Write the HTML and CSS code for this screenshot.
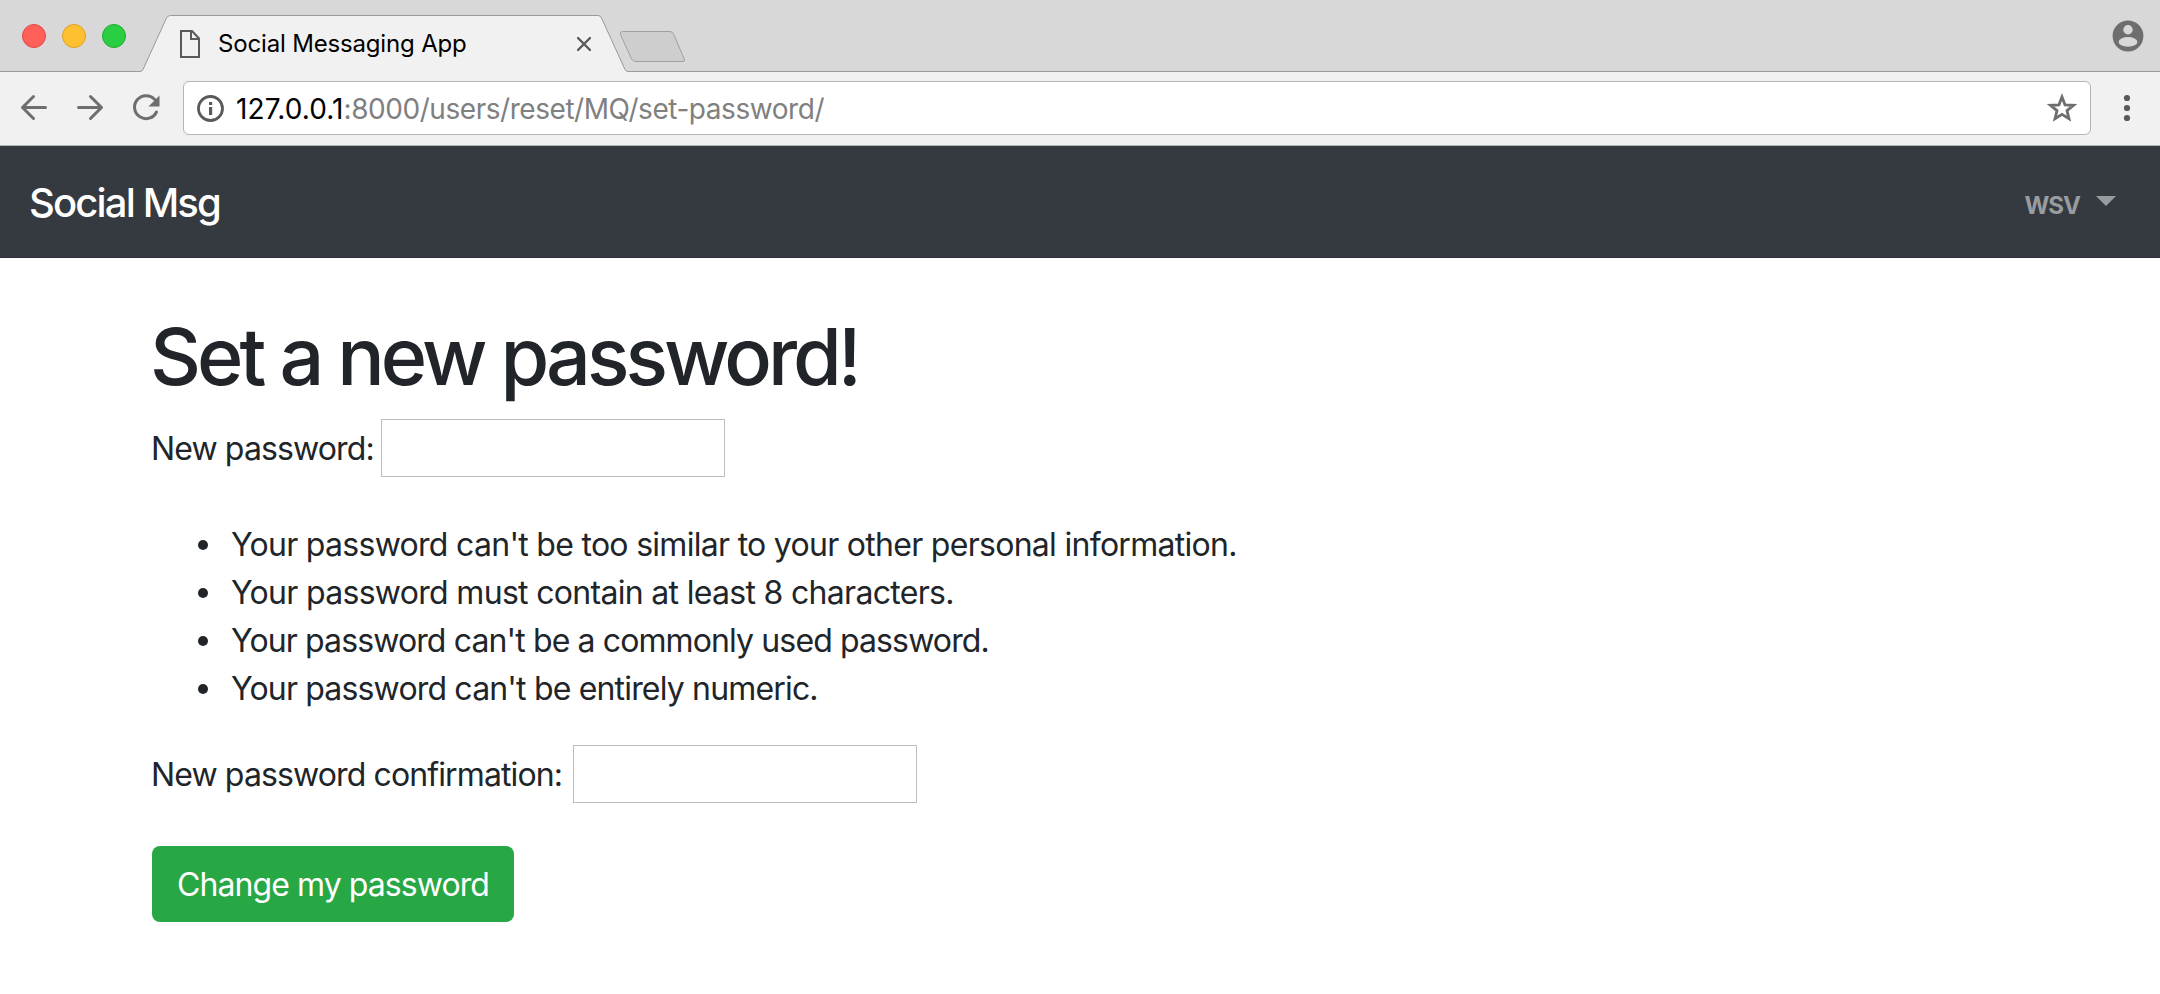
FILE: index.html
```html
<!DOCTYPE html>
<html lang="en">
<head>
<meta charset="utf-8">
<title>Social Messaging App</title>
<link rel="stylesheet" href="styles.css">
</head>
<body>
<header class="browser">
  <div class="tabstrip">
    <svg class="tab-shapes" width="2160" height="73" viewBox="0 0 2160 73">
      <path class="tab-fill" d="M0 71.5H140Q142 71.5 143 69.5L166.500 18Q168 15.500 170.500 15.500H598Q600.500 15.500 601.500 18L625 69.500Q626 71.500 628 71.500H2160V73H0Z"/>
      <path class="tab-line" d="M0 71.500H140Q142 71.500 143 69.500L166.500 18Q168 15.500 170.500 15.500H598Q600.500 15.500 601.500 18L625 69.500Q626 71.500 628 71.500H2160"/>
      <path class="new-tab" d="M622.500 31.500H670Q672.500 31.500 673.500 34L684 58.500Q685.500 61.500 683 61.500H636Q633 61.500 631.500 59L620.500 34.500Q619.500 31.500 622.500 31.500Z"/>
    </svg>
    <div class="lights"><i class="light red"></i><i class="light yellow"></i><i class="light green"></i></div>
    <div class="tab">
      <svg width="20" height="28" viewBox="0 0 20 28"><path d="M1 1H12L19 8.500V27H1Z M11 1V9H19" fill="none" stroke="#5a5a5a" stroke-width="2"/></svg>
      <span class="tab-title">Social Messaging App</span>
      <svg class="close" width="14" height="14" viewBox="0 0 14 14"><path d="M1 1L13 13M13 1L1 13" stroke="#5a5a5a" stroke-width="2.400" stroke-linecap="round"/></svg>
    </div>
    <svg class="profile" width="32" height="32" viewBox="0 0 32 32"><circle cx="16" cy="16" r="15.400" fill="#6e6e6e"/><circle cx="16" cy="9.700" r="4.700" fill="#d8d8d8"/><ellipse cx="16" cy="21.900" rx="9.400" ry="4.900" fill="#d8d8d8"/></svg>
  </div>
  <div class="toolbar">
    <svg class="nav-icons" width="162" height="32" viewBox="0 0 162 32">
      <g fill="none" stroke="#6e6e6e" stroke-width="3" stroke-linecap="round" stroke-linejoin="round">
        <path d="M25.500 16.500H2.500M13.500 5.500L2.500 16.500L13.500 27.500"/>
        <path d="M58.500 16.500H81.500M70.500 5.500L81.500 16.500L70.500 27.500"/>
        <path d="M134.500 8.300A11.500 11.500 0 1 0 136.500 21"/>
      </g>
      <path d="M139.500 4.500V15.500H128.500Z" fill="#6e6e6e"/>
    </svg>
    <div class="address">
      <svg width="28" height="28" viewBox="0 0 28 28"><circle cx="13.500" cy="14.500" r="12" fill="none" stroke="#5a5a5a" stroke-width="2.800"/><path d="M12 8h3.200v3h-3.200zM12 13h3.200v8h-3.200z" fill="#5a5a5a"/></svg>
      <span class="url"><b>127.0.0.1</b>:8000/users/reset/MQ/set-password/</span>
      <svg class="star" width="30" height="30" viewBox="0 0 30 30"><path d="M15 4L18 11.800L26.400 12.300L20 17.600L22 25.800L15 21.300L8 25.800L10 17.600L3.600 12.300L12 11.800Z" fill="none" stroke="#6e6e6e" stroke-width="2.800"/></svg>
    </div>
    <svg class="menu" width="8" height="28" viewBox="0 0 8 28" fill="#5a5a5a"><circle cx="4" cy="4" r="3.100"/><circle cx="4" cy="14" r="3.100"/><circle cx="4" cy="24" r="3.100"/></svg>
  </div>
</header>
<nav class="navbar">
  <a class="brand">Social Msg</a>
  <a class="user"><span>WSV</span><i class="caret"></i></a>
</nav>
<main class="content">
  <h1 class="heading">Set a new password!</h1>
  <form>
    <div class="field"><label class="label first" for="p1">New password:</label><input class="input" id="p1" type="password"></div>
    <ul class="rules">
      <li><span class="rule r1">Your password can't be too similar to your other personal information.</span></li>
      <li><span class="rule r2">Your password must contain at least 8 characters.</span></li>
      <li><span class="rule r3">Your password can't be a commonly used password.</span></li>
      <li><span class="rule r4">Your password can't be entirely numeric.</span></li>
    </ul>
    <div class="field"><label class="label second" for="p2">New password confirmation:</label><input class="input" id="p2" type="password"></div>
    <button class="submit" type="button">Change my password</button>
  </form>
</main>
</body>
</html>
```
FILE: styles.css
```css
* { box-sizing: border-box; }
body {
  margin: 0;
  background: #fff;
  color: #212529;
  font-family: Inter, "Liberation Sans", sans-serif;
  font-size: 32px;
  line-height: 48px;
  letter-spacing: -0.88px;
  white-space: nowrap;
  overflow: hidden;
}
svg { display: block; flex: none; }

.tabstrip { position: relative; height: 72px; display: flex; background: #d8d8d8; }
.tab-shapes { position: absolute; left: 0; top: 0; }
.tab-fill { fill: #f1f1f1; }
.tab-line { fill: none; stroke: #999; }
.new-tab { fill: #cecece; stroke: #a0a0a0; }
.lights { position: relative; display: flex; gap: 16px; padding: 24px 0 0 22px; width: 180px; }
.light { width: 24px; height: 24px; border-radius: 50%; border: 1px solid; }
.red { background: #ff6059; border-color: #e14942; }
.yellow { background: #ffc02f; border-color: #dfa023; }
.green { background: #29ce42; border-color: #1dad2b; }
.tab { position: relative; display: flex; align-items: center; width: 411px; height: 28px; margin-top: 30px; }
.tab-title { margin-left: 18px; color: #000; font-size: 24px; line-height: 28px; letter-spacing: -0.17px; }
.close { margin-left: auto; }
.profile { position: relative; margin: 20px 16px 0 auto; }

.toolbar { display: flex; height: 74px; background: #f1f1f1; border-bottom: 1px solid #aeb2b2; }
.nav-icons { margin: 19px 0 0 20px; }
.address { display: flex; align-items: center; width: 1908px; height: 54px; margin: 9px 0 0 1px; padding: 0 13px; border: 1px solid #b4b4b4; border-radius: 6px; background: #fff; }
.url { margin-left: 11px; padding-top: 3px; color: #808080; font-size: 28px; line-height: 49px; letter-spacing: -0.45px; }
.url b { color: #000; font-weight: 400; letter-spacing: 0.12px; }
.star { margin-left: auto; }
.menu { margin: 22px 0 0 32px; }

.navbar { display: flex; justify-content: space-between; height: 112px; padding: 0 44px 0 29px; background: #343a40; border-bottom: 1px solid #322f3a; }
.brand { color: #fff; font-size: 40px; font-weight: 450; line-height: 113px; letter-spacing: -1.85px; }
.user { display: flex; color: #999c9f; font-size: 24px; font-weight: 700; line-height: 120px; letter-spacing: -1px; }
.caret { width: 20px; height: 10px; margin: 50px 0 0 16px; background: currentColor; clip-path: polygon(0 0, 100% 0, 50% 100%); }

.content { padding: 48px 152px 0; }
.heading { margin: 2px 0 16px -2px; font-size: 79px; font-weight: 500; line-height: 96px; height: 95px; letter-spacing: -4px; }
.field { display: flex; align-items: center; height: 58px; }
.label { flex: none; line-height: 56px; padding-top: 2px; text-indent: -1px; }
.label.first { width: 229px; }
.label.second { width: 421px; }
.input { width: 344px; height: 58px; border: 1px solid #bdbdbd; background: #fff; outline: 0; padding: 2px; }
.rules { margin: 44px 0 32px; padding: 0; list-style: none; }
.rules li { display: flex; align-items: center; height: 48px; padding-left: 46px; }
.rules li::before { content: ""; width: 10px; height: 10px; margin-right: 23px; border-radius: 50%; background: #212529; }
.r1 { letter-spacing: -0.71px; }
.r2 { letter-spacing: -0.69px; }
.r3 { letter-spacing: -0.88px; }
.r4 { letter-spacing: -0.83px; }
.submit { display: block; width: 362px; height: 76px; margin-top: 43px; padding: 2px 0 0; border: 0; border-radius: 8px; background: #28a745; color: #fff; font: 400 32px/74px Inter, "Liberation Sans", sans-serif; letter-spacing: -0.92px; }
```
